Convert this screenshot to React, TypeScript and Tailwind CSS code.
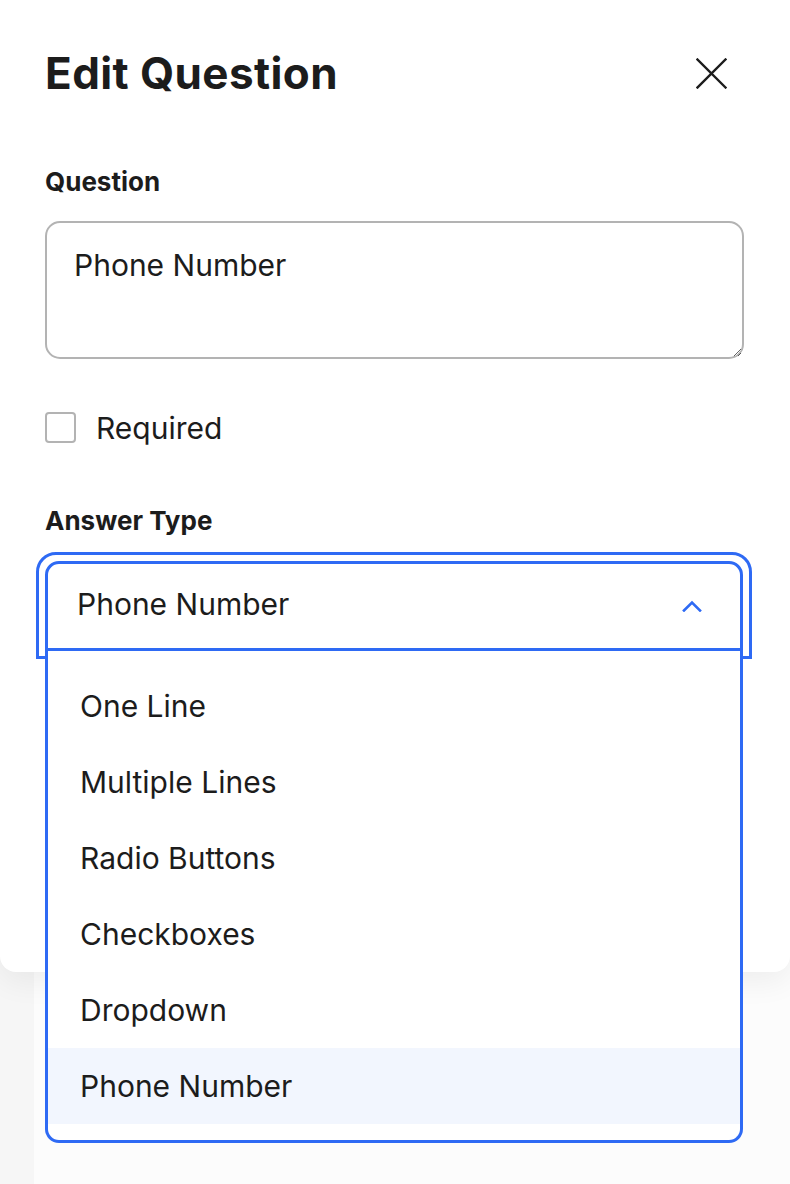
import React from "react";

const options = [
  "One Line",
  "Multiple Lines",
  "Radio Buttons",
  "Checkboxes",
  "Dropdown",
  "Phone Number",
];

export default function App() {
  return (
    <div className="relative flex h-[1184px] w-full overflow-hidden font-['Inter',sans-serif] text-[#1c1c1c]">
      <div className="w-[34px] bg-[#f6f6f6]" />
      <div className="flex-1 bg-[#fcfcfc]" />

      <div className="absolute inset-x-0 top-0 h-[972px] rounded-b-[16px] bg-white shadow-[0_10px_30px_rgba(0,0,0,0.06)]">
        <div className="flex items-center justify-between pl-[45px] pr-[63px] pt-[48px]">
          <h1 className="text-[44px] font-bold leading-[50px] tracking-[0.4px]">Edit Question</h1>
          <svg width="31" height="31" viewBox="0 0 31 31" fill="none">
            <path d="M1.5 1.5 L29.5 29.5 M29.5 1.5 L1.5 29.5" stroke="#1c1c1c" strokeWidth="2.4" strokeLinecap="square" />
          </svg>
        </div>

        <div className="px-[45px]">
          <div className="mt-[69px] text-[26px] font-bold leading-[30px]">Question</div>
          <textarea
            defaultValue="Phone Number"
            className="mt-[24px] block h-[138px] w-[699px] resize-y rounded-[15px] border-2 border-[#b3b3b3] pl-[27px] pt-[24px] text-[30px] leading-[36px] text-[#1c1c1c] outline-none"
          />

          <div className="mt-[53px] flex h-[31px] items-center">
            <div className="h-[31px] w-[31px] rounded-[4px] border-2 border-[#b3b3b3]" />
            <span className="ml-[20px] pt-[2px] text-[30px] leading-[29px]">Required</span>
          </div>

          <div className="mt-[63px] text-[26px] font-bold leading-[30px]">Answer Type</div>
        </div>

        <div className="ml-[36px] mt-[16px] h-[107px] w-[716px] rounded-t-[20px] border-[3px] border-[#2e6af4] px-[6px] pb-[5px] pt-[6px]">
          <div className="relative z-10">
            <div className="flex h-[90px] items-center justify-between rounded-t-[14px] border-[3px] border-[#2e6af4] bg-white pb-[4px] pl-[29px] pr-[38px]">
              <span className="text-[30px] leading-[36px]">Phone Number</span>
              <svg width="20" height="12" viewBox="0 0 20 12" fill="none" className="mt-[3px]">
                <path d="M2 10.5 L10 2.5 L18 10.5" stroke="#2e6af4" strokeWidth="2.6" strokeLinecap="square" />
              </svg>
            </div>
            <div className="absolute left-0 right-0 top-full rounded-b-[14px] border-x-[3px] border-b-[3px] border-[#2e6af4] bg-white pb-[16px] pt-[17px]">
              {options.map((o) => (
                <div
                  key={o}
                  className={
                    o === "Phone Number"
                      ? "flex h-[76px] items-center bg-[#f2f6fe] pl-[32px] text-[30px] leading-[36px]"
                      : "flex h-[76px] items-center pl-[32px] text-[30px] leading-[36px]"
                  }
                >
                  {o}
                </div>
              ))}
            </div>
          </div>
        </div>
      </div>
    </div>
  );
}
